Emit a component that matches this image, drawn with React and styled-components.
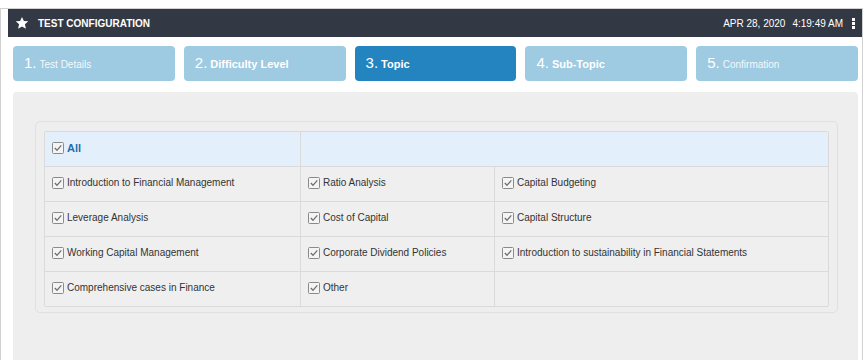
import React from "react";
import styled, { createGlobalStyle } from "styled-components";

const GlobalStyle = createGlobalStyle`
    * {
        box-sizing: border-box;
    }
    body {
        margin: 0;
        background: #ffffff;
        font-family: "Liberation Sans", Arial, sans-serif;
    }
`;

const Page = styled.div`
    padding-top: 8px;
    height: 360px;
    overflow: hidden;
`;

const Frame = styled.div`
    width: 863px;
    height: 400px;
    border: 1px solid #d2d2d2;
    border-bottom: none;
`;

const Header = styled.div`
    height: 28px;
    margin-left: 7px;
    padding: 0 7px 0 7px;

    display: flex;
    align-items: center;

    background: #333944;
    color: #ffffff;
`;

const Title = styled.div`
    margin-left: 9px;
    font-size: 10px;
    font-weight: 700;
`;

const Clock = styled.div`
    margin-left: auto;
    display: flex;
    align-items: center;
    gap: 7px;
    font-size: 10px;
`;

const Kebab = styled.div`
    margin-left: 2px;
    display: flex;
    flex-direction: column;
    gap: 1px;

    span {
        width: 3px;
        height: 3px;
        background: #ffffff;
    }
`;

const Body = styled.div`
    padding: 0 4px 0 12px;
`;

const Steps = styled.div`
    margin-top: 9px;
    display: grid;
    grid-template-columns: repeat(5, 1fr);
    gap: 9px;
`;

const Step = styled.div`
    height: 35px;
    padding: 0 0 1px 11px;

    display: flex;
    align-items: center;

    border-radius: 4px;
    background: ${(p) => (p.active ? "#2384bf" : "#9ecae2")};
    color: #ffffff;
`;

const StepText = styled.span`
    white-space: nowrap;
`;

const StepNum = styled.span`
    margin-right: 3px;
    font-size: 15px;
`;

const StepLabel = styled.span`
    font-size: ${(p) => (p.bold ? "11px" : "10px")};
    font-weight: ${(p) => (p.bold ? 700 : 400)};
    opacity: ${(p) => (p.bold ? 1 : 0.9)};
`;

const Panel = styled.div`
    margin-top: 11px;
    height: 300px;
    padding: 29px 20px 0 22px;

    border-radius: 4px;
    background: #eeeeee;
`;

const Card = styled.div`
    padding: 9px 8px 5px 8px;
    border: 1px solid #e0e0e0;
    border-radius: 5px;
`;

const Table = styled.div`
    display: grid;
    grid-template-columns: 256px 194px 1fr;
    border: 1px solid #dadada;
    border-radius: 2px;
    overflow: hidden;
`;

const Cell = styled.div`
    height: ${(p) => (p.first ? "34px" : "35px")};
    padding: 0 0 3px 7px;

    display: flex;
    align-items: center;
    gap: 3px;

    grid-column: ${(p) => p.span || "auto"};
    background: ${(p) => (p.head ? "#e3f0fb" : "#efefef")};
    border-right: ${(p) => (p.last ? "none" : "1px solid #dadada")};
    border-top: ${(p) => (p.first ? "none" : "1px solid #dadada")};

    font-size: 10px;
    color: #333333;
`;

const AllLabel = styled.span`
    font-weight: 700;
    color: #1d6db3;
    font-size: 11px;
`;

const Check = () => (
    <svg width="12" height="12" viewBox="0 0 12 12">
        <rect x="0.5" y="0.5" width="11" height="11" rx="1" fill="#f4f4f4" stroke="#8a8a8a" />
        <path d="M2.8 6 L5 8.3 L9.3 3.3" fill="none" stroke="#707070" strokeWidth="1.3" />
    </svg>
);

const Star = () => (
    <svg width="14" height="14" viewBox="0 0 24 24">
        <path
            d="M12 1.5l3.2 7 7.5.7-5.7 5 1.7 7.5L12 17.8 5.3 21.7 7 14.2 1.3 9.2l7.5-.7z"
            fill="#ffffff"
        />
    </svg>
);

const steps = [
    { num: "1.", label: "Test Details", bold: false },
    { num: "2.", label: "Difficulty Level", bold: true },
    { num: "3.", label: "Topic", bold: true, active: true },
    { num: "4.", label: "Sub-Topic", bold: true },
    { num: "5.", label: "Confirmation", bold: false },
];

const topics = [
    "Introduction to Financial Management",
    "Ratio Analysis",
    "Capital Budgeting",
    "Leverage Analysis",
    "Cost of Capital",
    "Capital Structure",
    "Working Capital Management",
    "Corporate Dividend Policies",
    "Introduction to sustainability in Financial Statements",
    "Comprehensive cases in Finance",
    "Other",
    null,
];

function App() {
    return (
        <Page>
            <GlobalStyle />
            <Frame>
                <Header>
                    <Star />
                    <Title>TEST CONFIGURATION</Title>
                    <Clock>
                        <span>APR 28, 2020</span>
                        <span>4:19:49 AM</span>
                        <Kebab>
                            <span />
                            <span />
                            <span />
                        </Kebab>
                    </Clock>
                </Header>
                <Body>
                    <Steps>
                        {steps.map((s) => (
                            <Step key={s.num} active={s.active}>
                                <StepText>
                                    <StepNum>{s.num}</StepNum>
                                    <StepLabel bold={s.bold}>{s.label}</StepLabel>
                                </StepText>
                            </Step>
                        ))}
                    </Steps>
                    <Panel>
                        <Card>
                            <Table>
                                <Cell head first>
                                    <Check />
                                    <AllLabel>All</AllLabel>
                                </Cell>
                                <Cell head first last span="span 2" />
                                {topics.map((t, i) => (
                                    <Cell key={i} last={i % 3 === 2}>
                                        {t && <Check />}
                                        {t && <span>{t}</span>}
                                    </Cell>
                                ))}
                            </Table>
                        </Card>
                    </Panel>
                </Body>
            </Frame>
        </Page>
    );
}

export default App;
